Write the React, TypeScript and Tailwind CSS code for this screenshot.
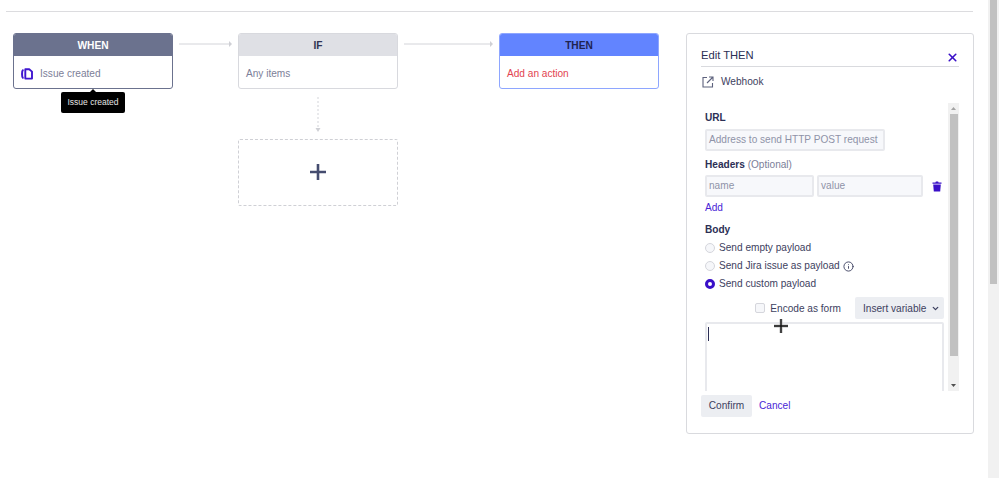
import React from 'react';
import { ChevronDown, Info, X } from 'lucide-react';

const FlowArrow = ({ width }: { width: number }) => (
  <svg width={width} height="8" viewBox={`0 0 ${width} 8`} className="block">
    <path d={`M0 4H${width - 3}`} stroke="#d3d4d9" strokeWidth="1" />
    <path d={`M${width - 3} 1L${width} 4L${width - 3} 7Z`} fill="#cfd0d5" />
  </svg>
);

const IssueIcon = () => (
  <svg width="12" height="12" viewBox="0 0 12 12" fill="none" className="block">
    <path d="M1.8 2.2C0.8 3 0.8 9 1.8 9.8" stroke="#3f16d0" strokeWidth="2" strokeLinecap="round" />
    <path d="M4.3 1.2H8.2L11 3.6V10.6H4.3V1.2Z" stroke="#3f16d0" strokeWidth="1.9" strokeLinejoin="round" />
  </svg>
);

const WebhookIcon = () => (
  <svg width="12" height="12" viewBox="0 0 12 12" fill="none" className="block">
    <path d="M5 1.5H1V11H10.5V7" stroke="#5d627d" strokeWidth="1.1" />
    <path d="M5 7L10.5 1.5M7 1H11V5" stroke="#5d627d" strokeWidth="1.1" />
  </svg>
);

const TrashIcon = () => (
  <svg width="10" height="11" viewBox="0 0 10 11" className="block">
    <path d="M0.5 1.6H3.4L3.9 0.6H6.1L6.6 1.6H9.5V2.8H0.5Z" fill="#3a10c8" />
    <path d="M1.2 3.4H8.8L8.2 10.4H1.8Z" fill="#3a10c8" />
  </svg>
);

const Card = ({ title, body, head, border, icon }: { title: string; body: string; head: string; border: string; icon?: React.ReactNode }) => (
  <div className={`h-[56px] w-[160px] overflow-hidden rounded-[3px] border ${border}`}>
    <div className={`flex h-[22px] items-center justify-center pt-[1px] text-[10.2px] font-bold ${head}`}>{title}</div>
    {body === 'Add an action' ? (
      <div className="flex h-[34px] items-center px-[7px] pt-[2px] text-[10.1px] text-[#e2434f]">{body}</div>
    ) : (
      <div className="flex h-[34px] items-center gap-[7px] px-[7px] pt-[2px] text-[10.1px] text-[#7c8098]">
        {icon}
        {body}
      </div>
    )}
  </div>
);

const RadioRow = ({ label, on, info }: { label: string; on?: boolean; info?: boolean }) => (
  <div className="flex h-[18px] items-center text-[10.1px] text-[#3d4160]">
    <span className={`mr-[4px] h-[10px] w-[10px] rounded-full border ${on ? 'border-[3px] border-[#3a10c8] bg-white' : 'border-[#d5d6dc] bg-[#f6f7fa]'}`} />
    {label}
    {info && <Info size={11} className="ml-[3px] text-[#3d4160]" />}
  </div>
);

export default function App() {
  return (
    <div className="relative flex h-[478px] w-[999px] overflow-hidden bg-white font-['Liberation_Sans',sans-serif]">
      <div className="w-[988px] shrink-0">
        <div className="ml-[6px] mt-[11px] h-[1px] w-[967px] bg-[#dcdcdf]" />
        <div className="mt-[21px] flex items-start pl-[13px]">
          <Card
            title="WHEN"
            body="Issue created"
            head="bg-[#6b728e] text-white"
            border="border-[#6b728e]"
            icon={<IssueIcon />}
          />
          <div className="flex w-[65px] justify-center pt-[7px]">
            <FlowArrow width={53} />
          </div>
          <div className="flex w-[160px] flex-col items-center">
            <Card title="IF" body="Any items" head="bg-[#dfe0e5] text-[#2f3352]" border="border-[#d8d9de]" />
            <svg width="6" height="36" viewBox="0 0 6 36" className="mt-[8px] block">
              <path d="M3 0V31" stroke="#d3d4d9" strokeDasharray="2 2" />
              <path d="M0.5 31H5.5L3 35Z" fill="#cfd0d5" />
            </svg>
            <div className="mt-[6px] flex h-[67px] w-[160px] items-center justify-center rounded-[2px] border border-dashed border-[#cfd0d5] pb-[2px]">
              <svg width="18" height="18" viewBox="0 0 18 18">
                <path d="M9 1V17M1 9H17" stroke="#454c6f" strokeWidth="2.6" />
              </svg>
            </div>
          </div>
          <div className="flex w-[101px] justify-center pt-[7px]">
            <FlowArrow width={89} />
          </div>
          <Card
            title="THEN"
            body="Add an action"
            head="bg-[#6284ff] text-[#1f2350]"
            border="border-[#8ea6ff]"
          />
          <div className="ml-[27px] h-[401px] w-[288px] shrink-0 rounded-[3px] border border-[#d9dade] px-[14px] pt-[11px]">
            <div className="flex h-[22px] items-center justify-between border-b border-[#d9dade] text-[11.2px] text-[#2c2f55]">
              <span>Edit THEN</span>
              <X size={13} strokeWidth={3} className="relative top-[2px] text-[#3a10c8]" />
            </div>
            <div className="mt-[8px] flex h-[14px] items-center gap-[7px] pl-[1px] text-[10.1px] text-[#3d4160]">
              <WebhookIcon />
              Webhook
            </div>
            <div className="mt-[14px] flex h-[288px] overflow-hidden">
              <div className="w-[247px] pl-[4px]">
                <div className="mt-[8px] text-[10.1px] font-bold leading-[13px] text-[#2c2f55]">URL</div>
                <div className="mt-[5px] flex h-[22px] w-[180px] items-center whitespace-nowrap rounded-[2px] border-2 border-[#e8e9ed] bg-[#f7f8fb] px-[2px] text-[10.1px] text-[#8f93a8]">
                  Address to send HTTP POST request
                </div>
                <div className="mt-[7px] text-[10.1px] leading-[13px] text-[#7c8098]">
                  <span className="font-bold text-[#2c2f55]">Headers</span> (Optional)
                </div>
                <div className="mt-[4px] flex items-center gap-[3px]">
                  <div className="flex h-[22px] w-[109px] items-center rounded-[2px] border-2 border-[#e8e9ed] bg-[#f7f8fb] px-[2px] text-[10.1px] text-[#8f93a8]">name</div>
                  <div className="flex h-[22px] w-[106px] items-center rounded-[2px] border-2 border-[#e8e9ed] bg-[#f7f8fb] px-[2px] text-[10.1px] text-[#8f93a8]">value</div>
                  <span className="ml-[6px]"><TrashIcon /></span>
                </div>
                <div className="mt-[3px] text-[10.1px] leading-[16px] text-[#4a1fd6]">Add</div>
                <div className="mt-[7px] text-[10.1px] font-bold leading-[13px] text-[#2c2f55]">Body</div>
                <div className="mt-[3px] flex flex-col">
                  <RadioRow label="Send empty payload" />
                  <RadioRow label="Send Jira issue as payload" info />
                  <RadioRow label="Send custom payload" on />
                </div>
                <div className="mt-[4px] flex h-[22px] w-[239px] items-center justify-end text-[10.1px] text-[#3d4160]">
                  <span className="mr-[5px] h-[10px] w-[10px] rounded-[2px] border border-[#d5d6dc] bg-[#f6f7fa]" />
                  <span className="pt-[1px]">Encode as form</span>
                  <div className="ml-[14px] flex h-[22px] w-[89px] items-center justify-start gap-[5px] rounded-[2px] bg-[#eceef2] pl-[8px] pt-[1px]">
                    Insert variable
                    <ChevronDown size={9} strokeWidth={3.5} />
                  </div>
                </div>
                <div className="mt-[3px] h-[90px] w-[239px] rounded-t-[2px] border-2 border-[#e8e9ed] px-[1px] pt-[3px]">
                  <div className="h-[14px] w-[1px] bg-[#2c2f55]" />
                </div>
              </div>
              <div className="flex w-[11px] flex-col items-center bg-[#f1f1f1]">
                <div className="flex h-[11px] items-center justify-center text-[#a3a3a3]">
                  <svg width="5" height="3" viewBox="0 0 5 3"><path d="M0 3L2.5 0L5 3Z" fill="currentColor" /></svg>
                </div>
                <div className="h-[242px] w-[8px] bg-[#c1c1c1]" />
                <div className="flex-1" />
                <div className="flex h-[11px] items-center justify-center text-[#505050]">
                  <svg width="5" height="3" viewBox="0 0 5 3"><path d="M0 0L5 0L2.5 3Z" fill="currentColor" /></svg>
                </div>
              </div>
            </div>
            <div className="mt-[4px] flex items-center text-[10.1px]">
              <div className="flex h-[22px] w-[51px] items-center justify-center rounded-[2px] bg-[#eceef2] text-[#3d4160]">Confirm</div>
              <span className="ml-[7px] text-[#4a1fd6]">Cancel</span>
            </div>
          </div>
        </div>
      </div>
      <div className="flex h-full w-[11px] flex-col items-end bg-[#f1f1f1]">
        <div className="mr-[2px] h-[284px] w-[7px] bg-[#c1c1c1]" />
      </div>

      {/* tooltip under the WHEN card */}
      <div className="absolute left-[61px] top-[92px] flex h-[21px] w-[64px] items-center justify-center rounded-[2px] bg-black text-[8.5px] text-[#e4e4e4]">
        <span className="absolute -top-[3px] left-[29px] h-0 w-0 border-x-[3px] border-b-[3px] border-x-transparent border-b-black" />
        Issue created
      </div>

      {/* mouse cursor */}
      <svg width="16" height="16" viewBox="0 0 16 16" className="absolute left-[773px] top-[318px]">
        <path d="M8 1V15M1 8H15" stroke="#b9b9b9" strokeWidth="3" />
        <path d="M8 1V15M1 8H15" stroke="#111" strokeWidth="1.4" />
      </svg>
    </div>
  );
}
